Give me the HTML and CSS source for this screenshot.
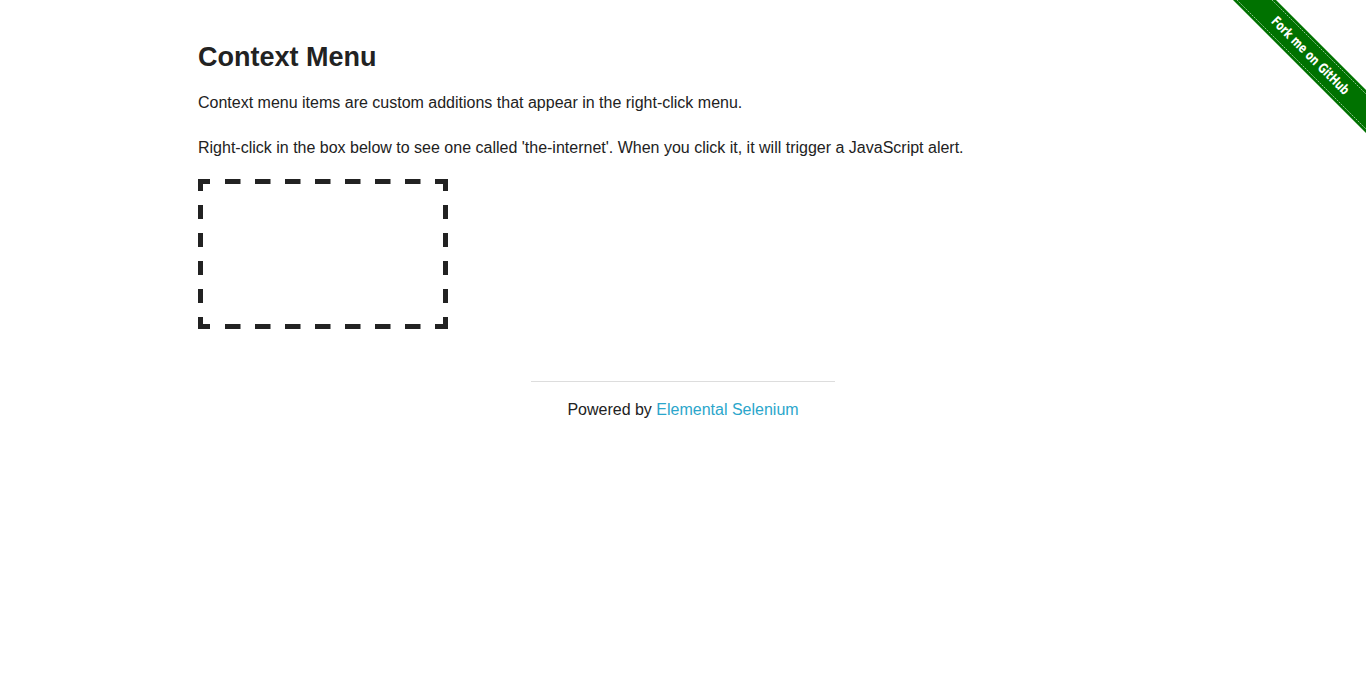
FILE: index.html
```html
<!DOCTYPE html>
<html lang="en">
<head>
<meta charset="utf-8">
<title>The Internet</title>
<link rel="stylesheet" href="styles.css">
</head>
<body>
<a class="ribbon" href="#">
  <svg width="140" height="140" viewBox="0 0 140 140">
    <polygon points="7,0 50,0 140,90 140,133" fill="#007200"/>
    <line x1="11" y1="0" x2="140" y2="129" stroke="#fff" stroke-width="1" stroke-dasharray="2 1" opacity="0.55"/>
    <line x1="46" y1="0" x2="140" y2="94" stroke="#fff" stroke-width="1" stroke-dasharray="2 1" opacity="0.55"/>
    <text x="84" y="60" transform="rotate(45 84 56)" fill="#fff" font-family="DejaVu Sans, sans-serif" font-weight="bold" font-size="13.5" text-anchor="middle" textLength="104" lengthAdjust="spacingAndGlyphs">Fork me on GitHub</text>
  </svg>
</a>
<div class="row">
  <div class="example">
    <h3 class="title">Context Menu</h3>
    <p class="text">Context menu items are custom additions that appear in the right-click menu.</p>
    <p class="text">Right-click in the box below to see one called 'the-internet'. When you click it, it will trigger a JavaScript alert.</p>
    <div class="hot-spot">
      <svg class="hot-spot-border" width="250" height="150" viewBox="0 0 250 150">
        <g fill="#222">
          <rect x="0" y="0" width="12" height="5"/>
          <rect x="27" y="0" width="15.5" height="5"/>
          <rect x="57" y="0" width="15.5" height="5"/>
          <rect x="87" y="0" width="15.5" height="5"/>
          <rect x="117" y="0" width="15.5" height="5"/>
          <rect x="147" y="0" width="15.5" height="5"/>
          <rect x="177" y="0" width="15.5" height="5"/>
          <rect x="207" y="0" width="15.5" height="5"/>
          <rect x="237" y="0" width="13" height="5"/>
          <rect x="0" y="145" width="12" height="5"/>
          <rect x="27" y="145" width="15.5" height="5"/>
          <rect x="57" y="145" width="15.5" height="5"/>
          <rect x="87" y="145" width="15.5" height="5"/>
          <rect x="117" y="145" width="15.5" height="5"/>
          <rect x="147" y="145" width="15.5" height="5"/>
          <rect x="177" y="145" width="15.5" height="5"/>
          <rect x="207" y="145" width="15.5" height="5"/>
          <rect x="237" y="145" width="13" height="5"/>
          <rect x="0" y="0" width="5" height="12"/>
          <rect x="0" y="26" width="5" height="14"/>
          <rect x="0" y="54" width="5" height="14"/>
          <rect x="0" y="82" width="5" height="14"/>
          <rect x="0" y="110" width="5" height="14"/>
          <rect x="0" y="138" width="5" height="12"/>
          <rect x="245" y="0" width="5" height="12"/>
          <rect x="245" y="26" width="5" height="14"/>
          <rect x="245" y="54" width="5" height="14"/>
          <rect x="245" y="82" width="5" height="14"/>
          <rect x="245" y="110" width="5" height="14"/>
          <rect x="245" y="138" width="5" height="12"/>
        </g>
      </svg>
    </div>
  </div>
</div>
<div class="footer">
  <hr class="rule">
  <div class="powered">Powered by <a class="link" href="#">Elemental Selenium</a></div>
</div>
</body>
</html>
```
FILE: styles.css
```css
html, body {
  margin: 0;
  padding: 0;
  background: #fff;
}
body {
  font-family: "Liberation Sans", Arial, sans-serif;
  color: #222;
  font-size: 16px;
}
.ribbon {
  position: absolute;
  top: 0;
  right: 0;
  width: 140px;
  height: 140px;
  display: block;
}
.ribbon svg {
  display: block;
  overflow: visible;
}
.row {
  max-width: 1000px;
  margin: 0 auto;
  padding: 0 15px;
  box-sizing: border-box;
}
.example {
  padding-top: 41px;
}
.title {
  font-size: 27px;
  font-weight: bold;
  line-height: 32px;
  margin: 0 0 17px 0;
  color: #222;
}
.text {
  margin: 0 0 19px 0;
  line-height: 25.6px;
}
.hot-spot {
  width: 250px;
  height: 150px;
}
.hot-spot-border {
  display: block;
}
.footer {
  width: 304px;
  margin: 52px auto 0;
  text-align: center;
}
.rule {
  border: 0;
  border-top: 1px solid #ddd;
  margin: 0 0 15px 0;
  height: 0;
}
.powered {
  line-height: 25.6px;
}
.link {
  color: #2ba6cb;
  text-decoration: none;
}
```
